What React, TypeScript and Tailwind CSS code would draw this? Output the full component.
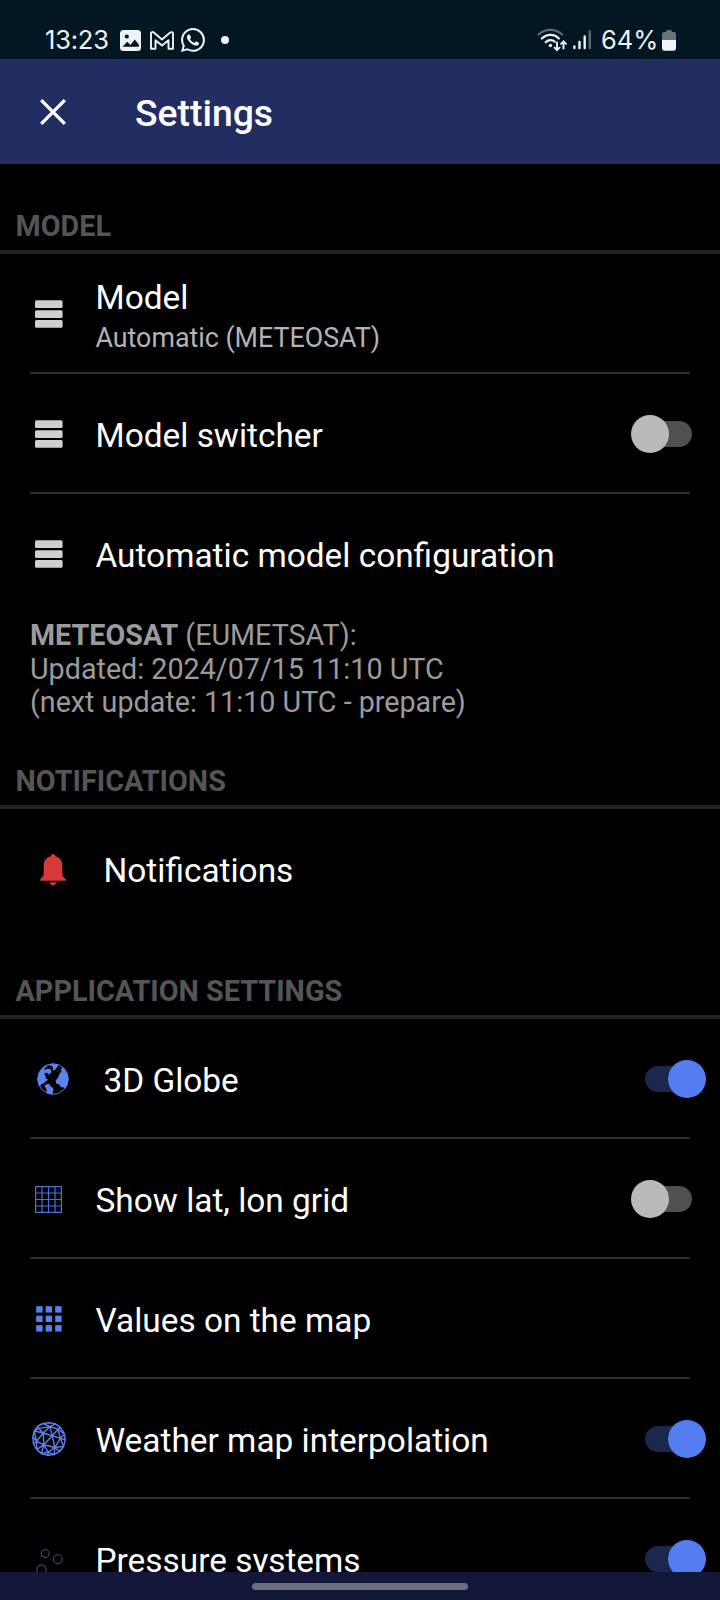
import React, { useState } from 'react';
import clsx from 'clsx';
import { BsWhatsapp } from 'react-icons/bs';

interface ToggleProps {
    checked: boolean;
    onChange: () => void;
}

const Toggle: React.FC<ToggleProps> = ({ checked, onChange }) => (
    <button
        onClick={onChange}
        className={clsx("relative flex h-[38px] w-[61px] items-center", checked ? "mr-[14px]" : "mr-7 justify-end")}
    >
        <span className={clsx("h-[26px] w-14 rounded-full", checked ? "bg-[#1b274b]" : "bg-[#505050]")} />
        <span
            className={clsx(
                "absolute top-0 size-[38px] rounded-full",
                checked ? "right-0 bg-[#537df0]" : "left-0 bg-[#bababa]"
            )}
        />
    </button>
);

const StackIcon = () => (
    <svg width="28" height="28" viewBox="0 0 28 28" fill="#cfcfcf">
        <rect y="0.3" width="27.6" height="7.7" rx="1.5" />
        <rect y="10.2" width="27.6" height="7.7" rx="1.5" />
        <rect y="20" width="27.6" height="7.7" rx="1.5" />
    </svg>
);

const BellIcon = () => (
    <svg width="26" height="32" viewBox="0 0 26 32" fill="#d53a38" className="mt-px">
        <path d="M13 0c1.3 0 2.1.8 2.3 2.2 4.400 1.100 7 4.600 7 9.300v8.300c0 2.200 1.200 3.600 3.400 5.200v1.700H.3V25c2.200-1.600 3.400-3 3.400-5.200v-8.300c0-4.700 2.600-8.200 7-9.300C10.900.8 11.700 0 13 0z" />
        <path d="M9.800 28.200h6.400c-.3 1.900-1.500 3.100-3.200 3.100s-2.900-1.200-3.200-3.100z" />
    </svg>
);

const GlobeIcon = () => (
    <svg width="32" height="32" viewBox="0 0 32 32">
        <circle cx="16" cy="16" r="15.3" fill="#000" stroke="#5b83f2" strokeWidth="0.9" />
        <g fill="#5b83f2">
            <path d="M10.400 1.700C5 3.700.7 9.300.7 16c0 2.800.8 5.500 2.200 7.800l1.200-2.300 3.200-1.400 1.800-2.200 2.200-.9-2.500-1.800-.4-2.500-1.100-1.400 1.600-1.700 2.200.9.700 1.200 2.300-1.900.4-1.800-1.300-2-2.900-.3-2.200 1.200-.9-1.300 3.100-2z" />
            <path d="M12.400 1.200l4.300-.4 5.200.8-1.800 2.600-2.600 3.300-1.700.2.200-3-1-1.700-2.600-.4z" />
            <path d="M25.200 4.100l-1.100 2.600.4 1.700-2.200 2.800-1.500 3.800-2.200 2.700.8 3 2.800.9 1.500 2.500 3.100.3.900 1.400c2.400-2.700 3.700-6 3.700-9.800 0-4.800-2.400-9.200-6.200-11.900z" />
            <path d="M12.500 20.900l-3.300.4-1.700 1.700 1.800 2.900.5 4.200c2 .9 4.100 1.300 6.300 1.200l-.4-2.100.9-2.500-1.200-2.500-1.900-1z" />
        </g>
    </svg>
);

const GridIcon = () => (
    <svg width="27" height="27" viewBox="0 0 27 27" fill="none" stroke="#4d71d6" strokeWidth="1.2">
        <path d="M.6.6h25.800v25.800H.6zM7 .6v25.800M13.500.6v25.800M20 .6v25.800M.6 7h25.800M.6 13.500h25.800M.6 20h25.800" />
    </svg>
);

const DotsIcon = () => (
    <svg width="26" height="26" viewBox="0 0 26 26" fill="#5880ef">
        {[0, 9.5, 19].map((y) =>
            [0, 9.5, 19].map((x) => <rect key={`${x}-${y}`} x={x + 0.2} y={y + 0.2} width="6.4" height="6.4" />)
        )}
    </svg>
);

const MeshIcon = () => (
    <svg width="34" height="34" viewBox="0 0 34 34" fill="none" stroke="#5b83f2" strokeWidth="1.4" strokeLinejoin="round">
        <path d="M11 1.500L17 .8l6.500 1.100 5.300 4 3.600 6 .8 6-1.600 6.500-3.900 5-5.700 3.200-6 .7-6.500-1.700-4.800-4.200L1.500 22 .8 15l1.500-6 3.700-5z" />
        <path d="M11 1.500l7 3.100 5.500-2.700M6 4l.8 2.400L18 4.600l8 2.600 2.800-1.300M2.300 9l4.500-2.600L11.200 11 18 4.600 20.300 13.800 26 7.200l2.300 9-8-2.400-9.100-2.800.6 11.800 8.500-9 2.600 11.700 5.400-9.300L32.400 12 26 7.200M28.300 16.200l4.900 1.700M22.900 25.500l8.700-1.100-3.900 5-4.800-3.900-11.100-2.700 4.400 7.400 6.700-4.700-.9 7.100-5.800-2.400-.2 3.100M16.200 30.200l-6.700 1.400 2.300-8.800-7.300-3.500 6.700-8.300L2.300 9l2.200 10.300L4.900 27.400l6.900-4.600M.8 15l3.700 4.300-3 2.700M31.600 24.400l-3.300-8.200" />
    </svg>
);

const PressureIcon = () => (
    <svg width="28" height="34" viewBox="0 0 28 34" fill="none" stroke="#3b4a82" strokeWidth="1.100">
        <circle cx="10.200" cy="11.700" r="3.900" />
        <circle cx="22.800" cy="17.200" r="4.400" />
        <circle cx="6.500" cy="27.600" r="4.700" />
    </svg>
);

// Status bar icons
const PictureIcon = () => (
    <svg width="21" height="21" viewBox="0 0 21 21">
        <rect width="21" height="21" rx="3.500" fill="#eef3f7" />
        <circle cx="6.800" cy="6.500" r="2.100" fill="#031722" />
        <path d="M2.500 16.800l4.700-5.100 3.200 3.400 4.400-5.600 4 5v2.300z" fill="#031722" />
    </svg>
);

const MailIcon = () => (
    <svg width="24" height="19" viewBox="0 0 24 19" fill="none" stroke="#eef3f7" strokeWidth="1.900" strokeLinejoin="round">
        <path d="M1 17.800V2.400C1 1 2.700.7 3.800 1.600l8.200 6.800 8.200-6.800C21.300.7 23 1 23 2.400v15.400h-4.500V9.200L12 14.500 5.500 9.200v8.600z" />
    </svg>
);

const WifiIcon = () => (
    <svg width="31" height="24" viewBox="0 0 31 24" fill="none" strokeLinecap="round" strokeWidth="2.200">
        <path d="M1.500 6.500C8.500.2 18.500.2 25.200 6.500" stroke="#5d6a73" />
        <path d="M4.800 10.500c5-4.900 12.500-4.900 17 0M8.700 14.200c2.700-2.600 6.700-2.600 9.100-.4" stroke="#eef3f7" />
        <circle cx="13.400" cy="17.500" r="1.700" fill="#eef3f7" />
        <path d="M20 14.500v7.500m-2.500-2.300L20 22.200l2.500-2.500M26.500 20.500v-7m-2.500 2.300l2.500-2.500 2.500 2.500" stroke="#eef3f7" strokeWidth="1.900" />
    </svg>
);

const SignalIcon = () => (
    <svg width="19" height="20" viewBox="0 0 19 20" strokeLinecap="round" strokeWidth="2.400" stroke="#eef3f7">
        <path d="M1.400 16.500v1.600M6.500 12v6.100M11.700 6.500v11.600" />
        <path d="M16.800 1.500v16.600" stroke="#5d6a73" />
    </svg>
);

const BatteryIcon = () => (
    <svg width="14" height="21" viewBox="0 0 14 21">
        <path d="M4 2q0-2 2-2h2q2 0 2 2h1.500Q14 2 14 4.500V10H0V4.500Q0 2 2.500 2z" fill="#6b747c" />
        <path d="M0 10h14v8q0 2.700-2.700 2.700H2.700Q0 20.700 0 18z" fill="#f1f3f5" />
    </svg>
);

interface RowProps {
    icon: React.ReactNode;
    title: string;
    subtitle?: string;
    wide?: boolean; // icon slot is a bit wider on some rows
    divider?: boolean;
    checked?: boolean;
    onToggle?: () => void;
}

const Row: React.FC<RowProps> = ({ icon, title, subtitle, wide, divider, checked, onToggle }) => (
    <div className="relative flex h-[120px] shrink-0 items-center">
        <div className={clsx("flex shrink-0 items-center justify-center", wide ? "ml-[29px] w-12" : "ml-6 w-[49px]")}>{icon}</div>
        <div className={clsx("flex-1", wide ? "ml-[26.500px]" : "ml-[22.500px]")}>
            <div className={clsx("text-[33.400px] text-white", subtitle ? "mt-[5px] leading-[42px]" : "mt-[3px] leading-10")}>{title}</div>
            {subtitle && <div className="text-[26.800px] leading-[38px] text-[#b3b3b3]">{subtitle}</div>}
        </div>
        {onToggle && <Toggle checked={!!checked} onChange={onToggle} />}
        {divider && <div className="absolute inset-x-[30px] bottom-0 h-[2px] bg-[#2f2f36]" />}
    </div>
);

const SectionHeader = ({ title }: { title: string }) => (
    <div className="flex h-[60px] shrink-0 items-center border-b-4 border-[#222222] pl-[15.500px] pt-[9px] text-[28.800px] font-bold text-[#555555]">
        {title}
    </div>
);

export default function App() {
    const [settings, setSettings] = useState({
        switcher: false,
        globe: true,
        grid: false,
        interpolation: true,
        pressure: true,
    });

    const toggle = (key: keyof typeof settings) => setSettings({ ...settings, [key]: !settings[key] });

    return (
        <div className="flex h-[1600px] w-[720px] flex-col overflow-hidden bg-black font-['Roboto',sans-serif]">
            {/* Status bar */}
            <div className="flex h-[59px] shrink-0 items-center bg-[#031722] pt-[21px] font-['Inter',sans-serif] text-[25.500px] text-[#eef3f7]">
                <span className="ml-[45px] w-[75px] tracking-[-0.2px]">13:23</span>
                <PictureIcon />
                <span className="ml-[9px]"><MailIcon /></span>
                <BsWhatsapp size={24} className="ml-[7px]" />
                <span className="ml-4 size-2 rounded-full bg-[#eef3f7]" />
                <span className="ml-auto"><WifiIcon /></span>
                <span className="ml-[5px]"><SignalIcon /></span>
                <span className="ml-[9px] w-[61px]">64%</span>
                <span className="mr-11"><BatteryIcon /></span>
            </div>

            {/* App bar */}
            <header className="flex h-[105px] shrink-0 items-center bg-[#222d62]">
                <svg width="26" height="26" viewBox="0 0 26 26" className="ml-10" stroke="#fff" strokeWidth="3.300">
                    <path d="M1.200 1.200l23.600 23.600M24.800 1.200L1.200 24.800" />
                </svg>
                <h1 className="ml-[69px] mt-[4px] text-[37.300px] font-medium text-white">Settings</h1>
            </header>

            <main className="flex min-h-0 flex-1 flex-col overflow-hidden pt-[30px]">
                <SectionHeader title="MODEL" />
                <Row icon={<StackIcon />} title="Model" subtitle="Automatic (METEOSAT)" divider />
                <Row icon={<StackIcon />} title="Model switcher" divider checked={settings.switcher} onToggle={() => toggle('switcher')} />
                <Row icon={<StackIcon />} title="Automatic model configuration" />
                <div className="h-[135px] shrink-0 pl-[30px] pt-[5px] text-[28.700px] leading-[33.500px] text-[#9b9b9b]">
                    <p><b>METEOSAT</b> (EUMETSAT):</p>
                    <p>Updated: 2024/07/15 11:10 UTC</p>
                    <p>(next update: 11:10 UTC - prepare)</p>
                </div>

                <SectionHeader title="NOTIFICATIONS" />
                <Row icon={<BellIcon />} title="Notifications" wide />

                <div className="mt-[30px]">
                    <SectionHeader title="APPLICATION SETTINGS" />
                </div>
                <Row icon={<GlobeIcon />} title="3D Globe" wide divider checked={settings.globe} onToggle={() => toggle('globe')} />
                <Row icon={<GridIcon />} title="Show lat, lon grid" divider checked={settings.grid} onToggle={() => toggle('grid')} />
                <Row icon={<DotsIcon />} title="Values on the map" divider />
                <Row icon={<MeshIcon />} title="Weather map interpolation" divider checked={settings.interpolation} onToggle={() => toggle('interpolation')} />
                <Row icon={<PressureIcon />} title="Pressure systems" checked={settings.pressure} onToggle={() => toggle('pressure')} />
            </main>

            {/* Gesture navigation bar */}
            <div className="z-10 flex h-7 shrink-0 justify-center bg-[#13183a] pt-[11px]">
                <div className="h-[7px] w-[216px] rounded-full bg-[#6c6d7d]" />
            </div>
        </div>
    );
}
